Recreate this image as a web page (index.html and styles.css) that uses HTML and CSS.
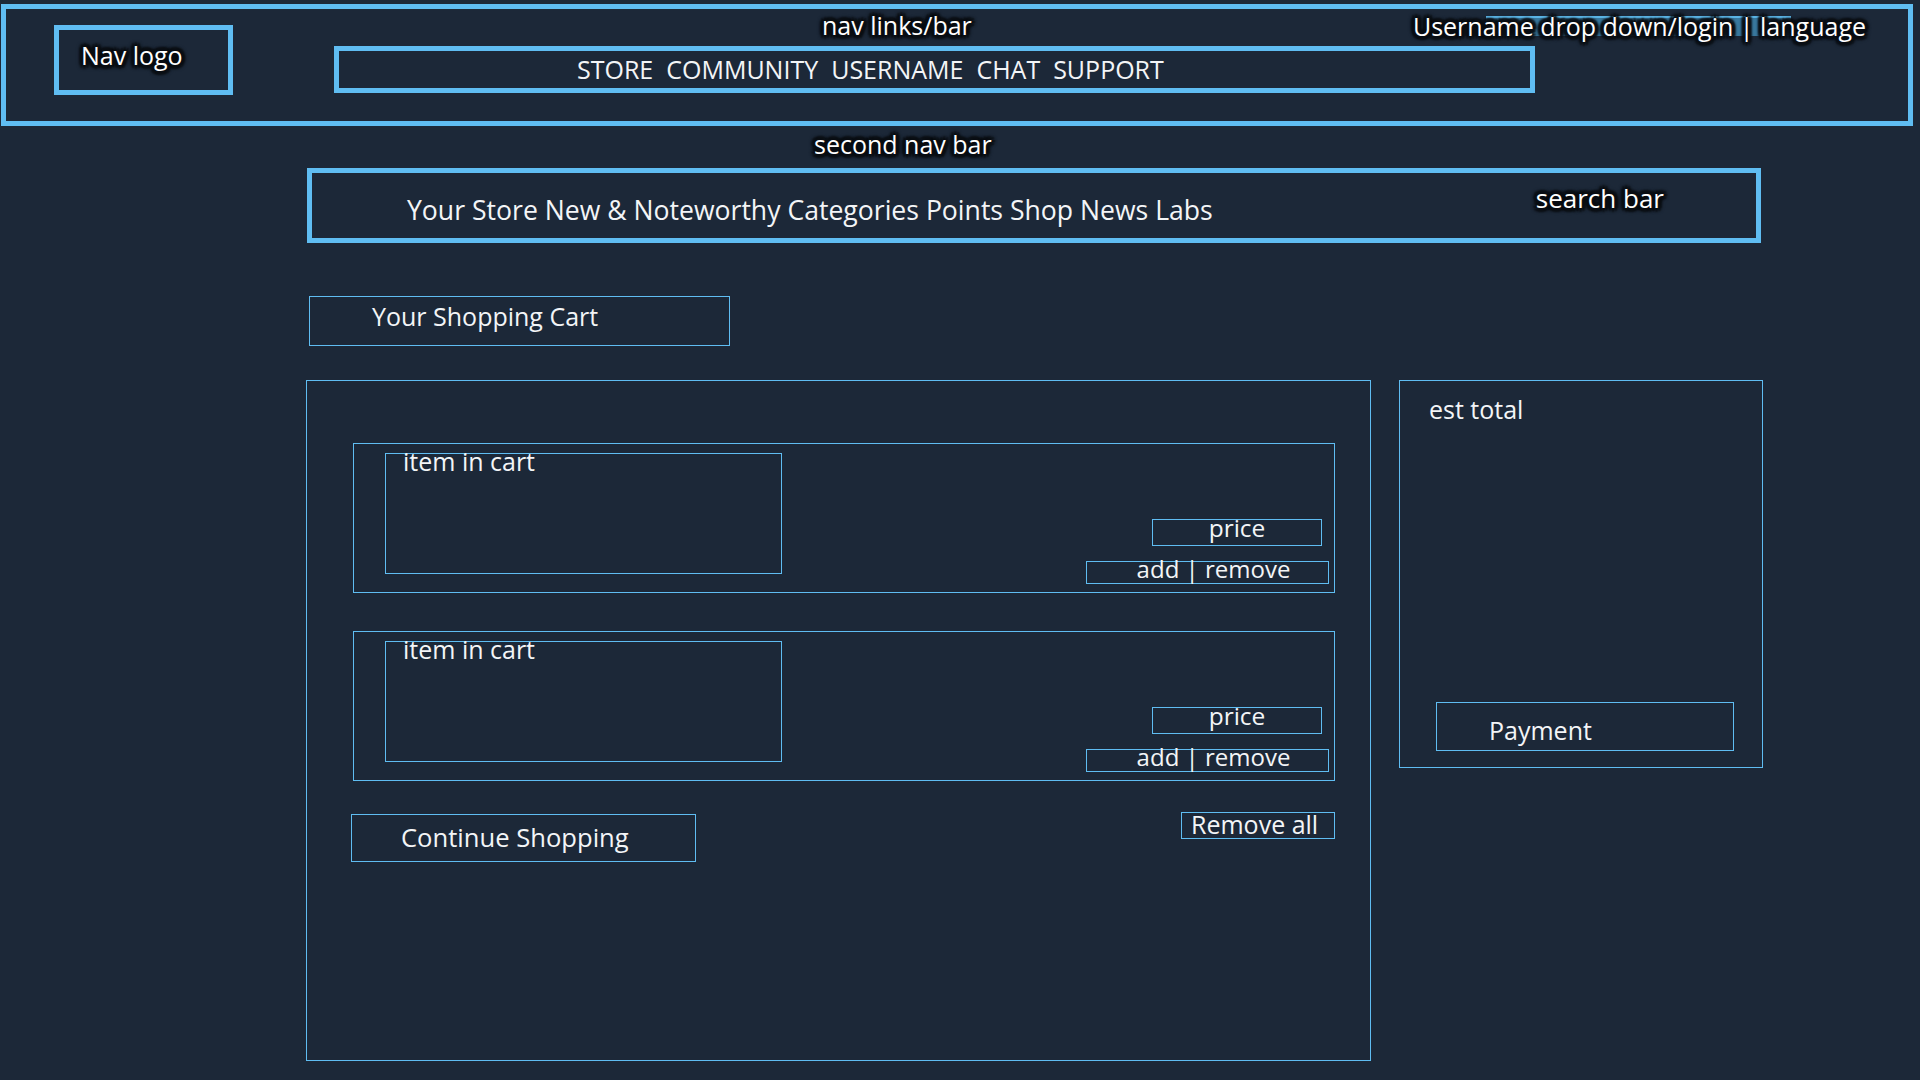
FILE: index.html
```html
<!DOCTYPE html>
<html lang="en">
<head>
<meta charset="utf-8">
<title>Shopping Cart Wireframe</title>
<link rel="stylesheet" href="styles.css">
</head>
<body>
<header class="topnav">
  <div class="logo"><span class="halo">Nav logo</span></div>
  <div class="navcol">
    <div class="navcol-top">
      <span class="halo label-navlinks">nav links/bar</span>
      <span class="halo user">Username drop down/login | language</span>
    </div>
    <nav class="navlinks">STORE&nbsp; COMMUNITY&nbsp; USERNAME&nbsp; CHAT&nbsp; SUPPORT</nav>
  </div>
</header>

<div class="label-second"><span class="halo">second nav bar</span></div>
<nav class="secondnav">
  <span class="secondnav-links">Your Store New &amp; Noteworthy Categories Points Shop News Labs</span>
  <span class="halo search">search bar</span>
</nav>

<div class="cart-title">Your Shopping Cart</div>

<main class="cart-row">
  <section class="cart">
    <div class="item">
      <div class="item-img"><span class="item-label">item in cart</span></div>
      <div class="item-side">
        <div class="price">price</div>
        <div class="addrem">add | remove</div>
      </div>
    </div>
    <div class="item item-second">
      <div class="item-img"><span class="item-label">item in cart</span></div>
      <div class="item-side">
        <div class="price">price</div>
        <div class="addrem">add | remove</div>
      </div>
    </div>
    <div class="cart-actions">
      <div class="continue">Continue Shopping</div>
      <div class="remove-all">Remove all</div>
    </div>
  </section>
  <aside class="total">
    <div class="total-label">est total</div>
    <div class="payment">Payment</div>
  </aside>
</main>
</body>
</html>
```

FILE: styles.css
```css
* { box-sizing: border-box; }

html, body {
  margin: 0;
  padding: 0;
}

body {
  background: #1c2838;
  color: #f3f5f7;
  font-family: "Open Sans", "Noto Sans", sans-serif;
  font-size: 25px;
  width: 1920px;
  height: 1080px;
  overflow: hidden;
}

.halo {
  color: #ffffff;
  text-shadow:
    0 0 2px #0b0f14,
    2px 0 1px #0b0f14, -2px 0 1px #0b0f14,
    0 2px 1px #0b0f14, 0 -2px 1px #0b0f14,
    4px 0 2px #0b0f14, -4px 0 2px #0b0f14,
    0 4px 2px #0b0f14, 0 -4px 2px #0b0f14,
    3px 3px 2px #0b0f14, -3px 3px 2px #0b0f14,
    3px -3px 2px #0b0f14, -3px -3px 2px #0b0f14,
    0 0 6px #0b0f14;
}

/* ---------- top nav ---------- */
.topnav {
  margin: 4px 0 0 1px;
  width: 1912px;
  height: 122px;
  border: 5px solid #5fbdf2;
  display: flex;
  align-items: flex-start;
}

.logo {
  margin: 16px 0 0 48px;
  width: 179px;
  height: 70px;
  border: 5px solid #5fbdf2;
  padding: 10px 0 0 22px;
  line-height: 30px;
  font-size: 25px;
  flex: none;
}

.navcol {
  margin-left: 101px;
  width: 1532px;
  display: flex;
  flex-direction: column;
}

.navcol-top {
  display: flex;
  align-items: flex-start;
  height: 34px;
  line-height: 32px;
}

.label-navlinks {
  margin-left: 488px;
  font-size: 25px;
}

.user {
  margin-left: auto;
  margin-top: 1px;
  font-size: 25px;
  position: relative;
}

.user::before {
  content: "";
  position: absolute;
  left: 73px;
  top: 6px;
  width: 305px;
  height: 18px;
  background: #3a7aa0;
  border-top: 2px solid #5bb5e6;
  z-index: -1;
}

.navlinks {
  margin-top: 3px;
  width: 1201px;
  height: 47px;
  border: 5px solid #5fbdf2;
  padding-left: 238px;
  line-height: 37px;
  font-size: 25px;
  white-space: nowrap;
}

/* ---------- second nav ---------- */
.label-second {
  margin-left: 814px;
  height: 42px;
  padding-bottom: 4px;
  line-height: 36px;
  font-size: 25px;
}

.secondnav {
  margin-left: 307px;
  width: 1454px;
  height: 75px;
  border: 5px solid #5fbdf2;
  display: flex;
  align-items: flex-start;
  padding-left: 95px;
}

.secondnav-links {
  margin-top: 17px;
  line-height: 40px;
  font-size: 26.6px;
  white-space: nowrap;
}

.search {
  margin: 5px 92px 0 auto;
  line-height: 40px;
  font-size: 26px;
}

/* ---------- cart title ---------- */
.cart-title {
  margin: 53px 0 0 309px;
  width: 421px;
  height: 50px;
  border: 1px solid #5fbdf2;
  padding-left: 62px;
  line-height: 39px;
  font-size: 25px;
}

/* ---------- cart row ---------- */
.cart-row {
  margin: 34px 0 0 306px;
  display: flex;
  align-items: flex-start;
  gap: 28px;
}

.cart {
  width: 1065px;
  height: 681px;
  border: 1px solid #5fbdf2;
  display: flex;
  flex-direction: column;
}

.item {
  margin: 62px 35px 0 46px;
  height: 150px;
  border: 1px solid #5fbdf2;
  display: flex;
  align-items: flex-start;
}

.item-second {
  margin-top: 38px;
}

.item-img {
  margin: 9px 0 0 31px;
  width: 397px;
  height: 121px;
  border: 1px solid #5fbdf2;
  padding-left: 17px;
}

.item-label {
  display: block;
  margin-top: -5px;
  line-height: 24px;
  font-size: 25px;
}

.item-side {
  margin-left: auto;
  display: flex;
  flex-direction: column;
  align-items: flex-end;
}

.price {
  margin: 75px 12px 0 0;
  width: 170px;
  height: 27px;
  border: 1px solid #5fbdf2;
  text-align: center;
  line-height: 16px;
  font-size: 24.5px;
}

.addrem {
  margin: 15px 5px 0 0;
  width: 243px;
  height: 23px;
  border: 1px solid #5fbdf2;
  padding-left: 12px;
  text-align: center;
  line-height: 14px;
  font-size: 24px;
  white-space: nowrap;
}

.cart-actions {
  margin: 0 35px 0 44px;
  display: flex;
  align-items: flex-start;
}

.continue {
  margin-top: 33px;
  width: 345px;
  height: 48px;
  border: 1px solid #5fbdf2;
  padding-left: 49px;
  line-height: 45px;
  font-size: 25.6px;
  white-space: nowrap;
}

.remove-all {
  margin: 31px 0 0 auto;
  width: 154px;
  height: 27px;
  border: 1px solid #5fbdf2;
  padding-left: 9px;
  line-height: 22px;
  font-size: 25px;
  white-space: nowrap;
}

/* ---------- total ---------- */
.total {
  width: 364px;
  height: 388px;
  border: 1px solid #5fbdf2;
  display: flex;
  flex-direction: column;
}

.total-label {
  margin: 13px 0 0 29px;
  line-height: 30px;
  font-size: 25px;
}

.payment {
  margin: auto 0 16px 36px;
  width: 298px;
  height: 49px;
  border: 1px solid #5fbdf2;
  padding: 8px 0 0 52px;
  line-height: 39px;
  font-size: 25px;
}
```
